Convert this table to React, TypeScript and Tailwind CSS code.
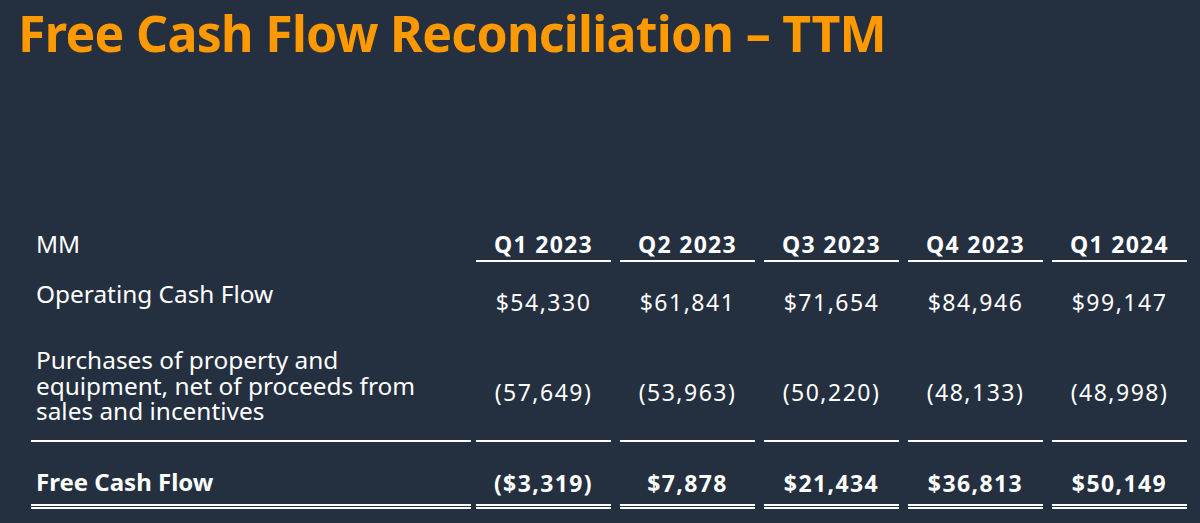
import React from "react";

const cols = ["Q1 2023", "Q2 2023", "Q3 2023", "Q4 2023", "Q1 2024"];
const ocf = ["$54,330", "$61,841", "$71,654", "$84,946", "$99,147"];
const capex = ["(57,649)", "(53,963)", "(50,220)", "(48,133)", "(48,998)"];
const fcf = ["($3,319)", "$7,878", "$21,434", "$36,813", "$50,149"];

const font = { fontFamily: '"Noto Sans", "Open Sans", sans-serif' };

export default function App() {
  return (
    <div
      className="w-[1200px] h-[523px] bg-[#242f3f] text-white overflow-hidden flex flex-col"
      style={font}
    >
      <h1 className="pl-[18px] pt-[7px] text-[50px] leading-[52px] tracking-[-0.7px] font-bold text-[#ff9900] whitespace-nowrap">
        Free Cash Flow Reconciliation – TTM
      </h1>

      <div className="mt-[171px] pl-[31px] flex flex-col">
        {/* Header row */}
        <div className="flex items-start">
          <div className="w-[445px] shrink-0">
            <div className="w-[440px] pl-[5px] text-[24.4px] leading-[28px]">MM</div>
          </div>
          {cols.map((c) => (
            <div key={c} className="w-[144px] shrink-0">
              <div className="w-[135px] text-center font-bold text-[23px] tracking-[1.3px] leading-[28px] pb-[2px] border-b-2 border-white">
                {c}
              </div>
            </div>
          ))}
        </div>

        {/* Operating cash flow */}
        <div className="flex items-start h-[54px]">
          <div className="w-[445px] shrink-0">
            <div className="w-[440px] pl-[5px] pt-[18px] text-[24.4px] leading-[28px]">
              Operating Cash Flow
            </div>
          </div>
          {ocf.map((v) => (
            <div key={v} className="w-[144px] shrink-0">
              <div className="w-[135px] pt-[26px] text-center text-[23px] tracking-[1.5px] leading-[28px]">
                {v}
              </div>
            </div>
          ))}
        </div>

        {/* Purchases */}
        <div className="flex items-start">
          <div className="w-[445px] shrink-0">
            <div className="w-[440px] h-[126px] pl-[5px] pt-[31px] text-[24.4px] leading-[25.5px] border-b-2 border-white whitespace-nowrap">
              Purchases of property and
              <br />
              equipment, net of proceeds from
              <br />
              sales and incentives
            </div>
          </div>
          {capex.map((v) => (
            <div key={v} className="w-[144px] shrink-0">
              <div className="w-[135px] h-[126px] pt-[64px] text-center text-[23px] tracking-[1.5px] leading-[25.5px] border-b-2 border-white">
                {v}
              </div>
            </div>
          ))}
        </div>

        {/* Free cash flow */}
        <div className="flex items-start">
          <div className="w-[445px] shrink-0">
            <div className="w-[440px] pl-[5px] pt-[26px] pb-[8px] font-bold text-[24px] leading-[28px] border-b-[5px] border-double border-white">
              Free Cash Flow
            </div>
          </div>
          {fcf.map((v) => (
            <div key={v} className="w-[144px] shrink-0">
              <div className="w-[135px] pt-[27px] pb-[7px] text-center font-bold text-[23px] tracking-[1.4px] leading-[28px] border-b-[5px] border-double border-white">
                {v}
              </div>
            </div>
          ))}
        </div>
      </div>
    </div>
  );
}
